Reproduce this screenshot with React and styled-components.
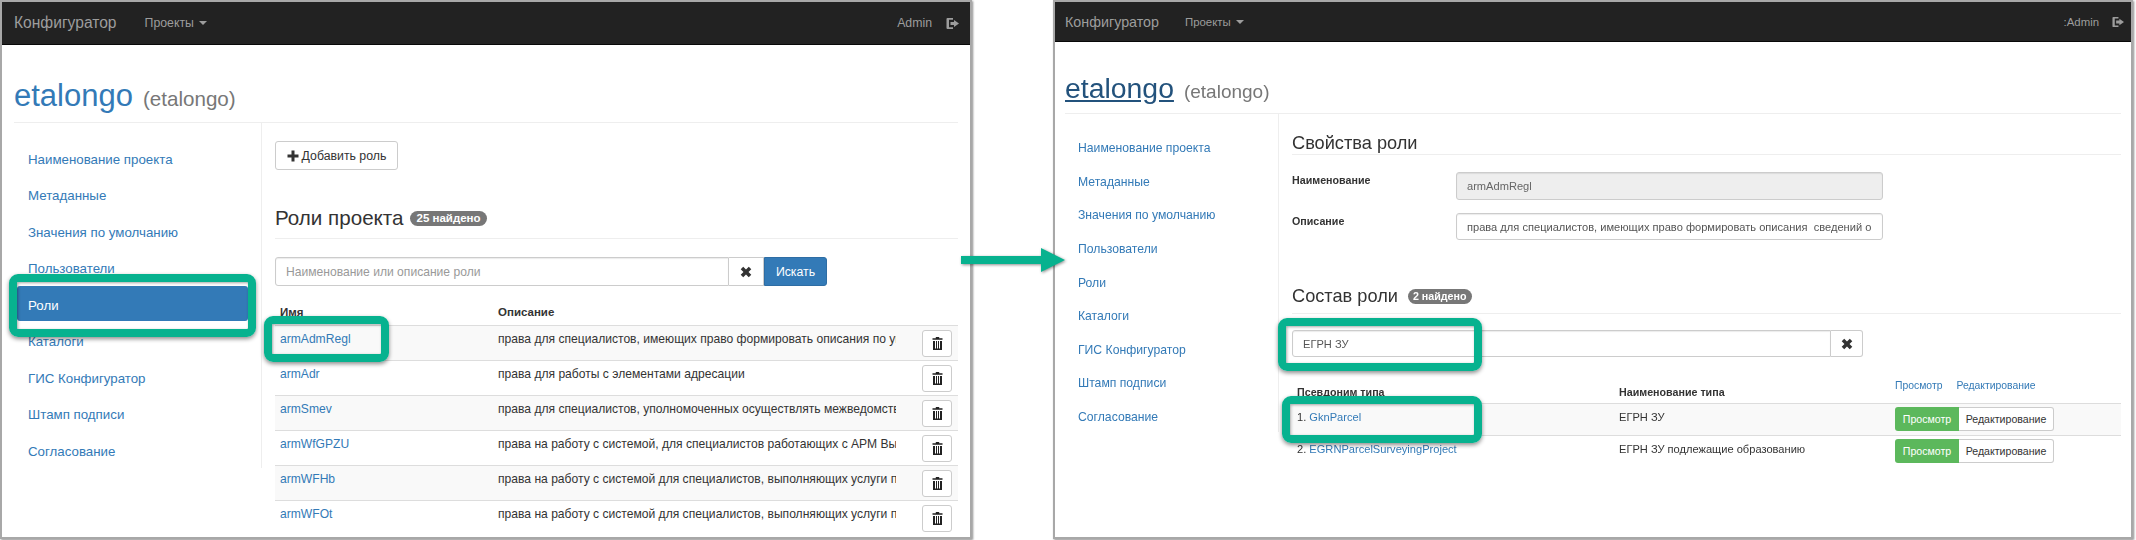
import React from 'react';
import styled, { createGlobalStyle, ThemeProvider } from 'styled-components';

const Global = createGlobalStyle`
  html, body { margin: 0; padding: 0; background: #fff; }
  body { font-family: "Liberation Sans", Arial, sans-serif; color: #333; }
  * { box-sizing: border-box; }
`;

const before = {
  width: 972, navH: 42, navPad: '0 11px 0 12px', navGap: 28, brand: 15.6, navText: 12.3, navGapIcon: 14,
  h1: 31, small: 20.6, h1Top: 34, pagePad: 12, side: 248, sideTop: 17, sideGap: 1.5, itemH: 35, itemW: 231, itemPad: 11,
  sideH: 345, sideText: 13.3, contentPad: 13, text: 12.1, bold: 11.5, h2: 20.6, small2: 11.5, btn: 12.3, badgePad: 6, badgeGap: 7,
};
const after = {
  width: 1080, navH: 39, navPad: '0 7px 0 10px', navGap: 26, brand: 14.3, navText: 11.4, navGapIcon: 13,
  h1: 28.4, small: 19, h1Top: 31, pagePad: 10, side: 214, sideTop: 17, sideGap: 2.6, itemH: 31, itemW: 205, itemPad: 10,
  sideH: 318, sideText: 12.2, contentPad: 13, text: 11.1, bold: 10.7, h2: 18.2, small2: 10.7, btn: 10.6, badgePad: 5, badgeGap: 10,
};

const Page = styled.div`
  position: relative;
  display: flex;
  gap: 81px;
  width: 2136px;
  height: 540px;
  overflow: hidden;
`;

const Win = styled.div`
  position: relative;
  flex: none;
  width: ${p => p.theme.width}px;
  height: 539px;
  border: 2px solid #a8a8a8;
  background: #fff;
  box-shadow: 1px 1px 2px rgba(0, 0, 0, 0.45);
  overflow: hidden;
  ${p => p.$soft && 'filter: blur(0.45px);'}
`;

const Navbar = styled.div`
  display: flex;
  align-items: center;
  gap: ${p => p.theme.navGap}px;
  height: ${p => p.theme.navH + 1}px;
  padding: ${p => p.theme.navPad};
  background: #222;
  border-bottom: 1px solid #080808;
  color: #9d9d9d;
`;

const Brand = styled.span`
  font-size: ${p => p.theme.brand}px;
`;

const NavLink = styled.span`
  display: flex;
  align-items: center;
  gap: 5px;
  font-size: ${p => p.theme.navText}px;
`;

const Caret = styled.i`
  width: 0;
  height: 0;
  border-top: 4px solid #9d9d9d;
  border-left: 4px solid transparent;
  border-right: 4px solid transparent;
`;

const UserBox = styled.div`
  margin-left: auto;
  display: flex;
  align-items: center;
  gap: ${p => p.theme.navGapIcon}px;
  font-size: ${p => p.theme.navText}px;
`;

const Main = styled.div`
  padding: 0 ${p => p.theme.pagePad}px;
`;

const Title = styled.div`
  display: flex;
  align-items: baseline;
  gap: 10px;
  padding: ${p => p.theme.h1Top}px 0 9px;
  border-bottom: 1px solid #eee;
`;

const ProjectName = styled.a`
  font-size: ${p => p.theme.h1}px;
  line-height: 1.1;
  color: ${p => (p.$hover ? '#23527c' : '#337ab7')};
  text-decoration: ${p => (p.$hover ? 'underline' : 'none')};
`;

const ProjectCode = styled.small`
  font-size: ${p => p.theme.small}px;
  color: #777;
`;

const Columns = styled.div`
  display: flex;
  align-items: flex-start;
`;

const Side = styled.ul`
  flex: none;
  list-style: none;
  display: flex;
  flex-direction: column;
  gap: ${p => p.theme.sideGap}px;
  width: ${p => p.theme.side}px;
  height: ${p => p.theme.sideH}px;
  margin: 0;
  padding: ${p => p.theme.sideTop}px 0 0 3px;
  border-right: 1px solid #eee;
`;

const SideItem = styled.li`
  display: flex;
  align-items: center;
  flex: none;
  width: ${p => p.theme.itemW}px;
  height: ${p => p.theme.itemH}px;
  padding: 3px 0 0 ${p => p.theme.itemPad}px;
  font-size: ${p => p.theme.sideText}px;
  border-radius: 3px;
  color: ${p => (p.$active ? '#fff' : '#337ab7')};
  background: ${p => (p.$active ? '#337ab7' : 'transparent')};
`;

const Content = styled.div`
  flex: 1;
  min-width: 0;
  padding: ${p => p.$top}px 0 0 ${p => p.theme.contentPad}px;
`;

const Button = styled.button`
  display: inline-flex;
  align-items: center;
  justify-content: center;
  gap: 3px;
  flex: none;
  width: ${p => p.$w}px;
  height: ${p => p.$h}px;
  padding: 0;
  font: inherit;
  font-size: ${p => p.theme.btn}px;
  color: #333;
  background: #fff;
  border: 1px solid #ccc;
  border-radius: 3px;
`;

const Section = styled.h2`
  display: flex;
  align-items: center;
  gap: ${p => p.theme.badgeGap}px;
  margin: ${p => p.$top}px 0 ${p => p.$bottom}px;
  padding-bottom: ${p => p.$pad}px;
  font-size: ${p => p.theme.h2}px;
  line-height: ${p => p.$lh}px;
  font-weight: 400;
  color: #333;
  border-bottom: 1px solid #eee;
`;

const Badge = styled.span`
  padding: 0 ${p => p.theme.badgePad}px;
  height: 15px;
  line-height: 15px;
  font-size: ${p => p.theme.small2}px;
  font-weight: 700;
  color: #fff;
  background: #777;
  border-radius: 8px;
`;

const SearchRow = styled.div`
  display: flex;
  height: ${p => p.$h}px;
`;

const Field = styled.input`
  display: block;
  width: ${p => p.$w}px;
  height: 100%;
  padding: 0 10px;
  font: inherit;
  font-size: ${p => p.theme.text}px;
  color: ${p => (p.disabled ? '#666' : '#555')};
  background: ${p => (p.disabled ? '#eee' : '#fff')};
  border: 1px solid #ccc;
  border-radius: 3px 0 0 3px;
  box-shadow: inset 0 1px 1px rgba(0, 0, 0, 0.08);
  &::placeholder { color: #999; opacity: 1; }
`;

const ClearBtn = styled(Button)`
  border-left: 0;
  border-radius: ${p => (p.$mid ? '0' : '0 3px 3px 0')};
`;

const SearchBtn = styled(Button)`
  color: #fff;
  background: #337ab7;
  border-color: #2e6da4;
  border-radius: 0 3px 3px 0;
`;

const TableHead = styled.div`
  display: grid;
  grid-template-columns: ${p => p.$cols};
  align-items: end;
  height: ${p => p.$h}px;
  margin-top: ${p => p.$top}px;
  font-size: ${p => p.theme.bold}px;
  font-weight: 700;
  line-height: 18px;
  padding-bottom: ${p => p.$pad}px;
`;

const HeadCell = styled.div`
  padding-left: 5px;
`;

const HeadLinks = styled.div`
  display: flex;
  gap: 14px;
  padding: 0 0 ${p => p.$up}px 5px;
  font-weight: 400;
  font-size: 10.4px;
  color: #337ab7;
`;

const Row = styled.div`
  display: grid;
  grid-template-columns: ${p => p.$cols};
  align-items: start;
  height: ${p => p.$h}px;
  font-size: ${p => p.theme.text}px;
  line-height: 20px;
  border-top: 1px solid #ddd;
  background: ${p => (p.$odd ? '#f9f9f9' : 'transparent')};
`;

const Cell = styled.div`
  padding: 3px 0 0 5px;
  white-space: nowrap;
  overflow: hidden;
`;

const Link = styled.a`
  color: #337ab7;
`;

const CellEnd = styled.div`
  display: flex;
  justify-content: flex-end;
  padding: 4px 5px 0 0;
`;

const CellBtns = styled.div`
  display: flex;
  padding: 3px 0 0 5px;
`;

const ViewBtn = styled.span`
  display: flex;
  align-items: center;
  justify-content: center;
  width: 64px;
  height: 24px;
  font-size: ${p => p.theme.btn}px;
  color: #fff;
  background: #5cb85c;
  border-radius: 3px 0 0 3px;
`;

const EditBtn = styled.span`
  display: flex;
  align-items: center;
  justify-content: center;
  width: 95px;
  height: 24px;
  font-size: ${p => p.theme.btn}px;
  color: #333;
  background: #fff;
  border: 1px solid #ccc;
  border-left: 0;
  border-radius: 0 3px 3px 0;
`;

const Form = styled.div`
  display: grid;
  grid-template-columns: 164px 427px;
  row-gap: 13px;
  margin-top: 17px;
`;

const Label = styled.label`
  font-size: ${p => p.theme.bold}px;
  font-weight: 700;
  line-height: 16px;
`;

const FormField = styled(Field)`
  width: 100%;
  height: ${p => p.$h}px;
  border-radius: 3px;
`;

// green frames drawn on top of the screenshots
const Frame = styled.div`
  position: absolute;
  left: ${p => p.$x}px;
  top: ${p => p.$y}px;
  width: ${p => p.$w}px;
  height: ${p => p.$h}px;
  border: 8px solid #07b28f;
  border-radius: 9px;
  box-shadow: 0 2px 4px rgba(0, 0, 0, 0.45), inset 1px 1px 3px rgba(0, 0, 0, 0.35);
`;

const Arrow = styled.svg`
  position: absolute;
  left: 961px;
  top: 248px;
  filter: drop-shadow(1px 1px 1.5px rgba(0, 0, 0, 0.45));
`;

const Plus = () => (
  <svg width="12" height="12" viewBox="0 0 12 12"><path d="M4.5 0.5h3v4h4v3h-4v4h-3v-4h-4v-3h4z" fill="#333" /></svg>
);

const Cross = () => (
  <svg width="12" height="12" viewBox="0 0 10 10"><path d="M2.7 0.6L5 2.9 7.3 0.6 9.4 2.7 7.1 5 9.4 7.3 7.3 9.4 5 7.1 2.7 9.4 0.6 7.3 2.9 5 0.6 2.7z" fill="#333" /></svg>
);

const Trash = () => (
  <svg width="11" height="13" viewBox="0 0 11 13" fill="#222">
    <path d="M3.8 0h3.4v1.3h3.3v1.5H.5V1.3h3.3z" />
    <path d="M1 4h2v7.5h1V4h1v7.5h1V4h1v7.5h1V4h2v9H1z" />
  </svg>
);

const LogOut = ({ size }) => (
  <svg width={size} height={size} viewBox="0 0 13 13" fill="#9d9d9d">
    <path d="M1.5 1H7v1.8H3v7.4h4V12H1.5A1 1 0 0 1 .5 11V2a1 1 0 0 1 1-1z" />
    <path d="M8 3l5 3.5L8 10V8H4.5V5H8z" />
  </svg>
);

const sideItems = ['Наименование проекта', 'Метаданные', 'Значения по умолчанию', 'Пользователи', 'Роли', 'Каталоги', 'ГИС Конфигуратор', 'Штамп подписи', 'Согласование'];

const roles = [
  ['armAdmRegl', 'права для специалистов, имеющих право формировать описания по управлению'],
  ['armAdr', 'права для работы с элементами адресации'],
  ['armSmev', 'права для специалистов, уполномоченных осуществлять межведомственное взаимодействие'],
  ['armWfGPZU', 'права на работу с системой, для специалистов работающих с АРМ Выдачи ГПЗУ'],
  ['armWFHb', 'права на работу с системой для специалистов, выполняющих услуги по заявкам'],
  ['armWFOt', 'права на работу с системой для специалистов, выполняющих услуги по отчетам'],
];

const types = [
  ['GknParcel', 'ЕГРН ЗУ'],
  ['EGRNParcelSurveyingProject', 'ЕГРН ЗУ подлежащие образованию'],
];

const roleCols = '218px 403px 61px';
const typeCols = '322px 276px 234px';

const Shell = ({ hover, active, soft, iconSize, user, children, frames }) => (
  <Win $soft={soft}>
    <Navbar>
      <Brand>Конфигуратор</Brand>
      <NavLink>Проекты <Caret /></NavLink>
      <UserBox>{user}<LogOut size={iconSize} /></UserBox>
    </Navbar>
    <Main>
      <Title>
        <ProjectName $hover={hover}>etalongo</ProjectName>
        <ProjectCode>(etalongo)</ProjectCode>
      </Title>
      <Columns>
        <Side>
          {sideItems.map(name => <SideItem key={name} $active={name === active}>{name}</SideItem>)}
        </Side>
        {children}
      </Columns>
    </Main>
    {frames}
  </Win>
);

export default function App() {
  return (
    <Page>
      <Global />
      <ThemeProvider theme={before}>
        <Shell
          active="Роли"
          iconSize={13}
          user="Admin"
          frames={
            <>
              <Frame $x={7} $y={272} $w={247} $h={63} />
              <Frame $x={262} $y={314} $w={125} $h={46} />
            </>
          }
        >
          <Content $top={18}>
            <Button $w={123} $h={29}><Plus />Добавить роль</Button>
            <Section $top={34} $bottom={18} $pad={6} $lh={28}>
              Роли проекта <Badge>25 найдено</Badge>
            </Section>
            <SearchRow $h={29}>
              <Field $w={454} placeholder="Наименование или описание роли" />
              <ClearBtn $w={35} $h={29} $mid><Cross /></ClearBtn>
              <SearchBtn $w={63} $h={29}>Искать</SearchBtn>
            </SearchRow>
            <TableHead $cols={roleCols} $h={25} $top={14} $pad={4}>
              <HeadCell>Имя</HeadCell>
              <HeadCell>Описание</HeadCell>
            </TableHead>
            {roles.map(([name, text], i) => (
              <Row key={name} $cols={roleCols} $h={35} $odd={i % 2 === 0}>
                <Cell><Link>{name}</Link></Cell>
                <Cell>{text}</Cell>
                <CellEnd><Button $w={30} $h={27}><Trash /></Button></CellEnd>
              </Row>
            ))}
          </Content>
        </Shell>
      </ThemeProvider>

      <ThemeProvider theme={after}>
        <Shell
          hover
          soft
          iconSize={12}
          user=":Admin"
          frames={
            <>
              <Frame $x={223} $y={316} $w={204} $h={53} />
              <Frame $x={227} $y={394} $w={200} $h={47} />
            </>
          }
        >
          <Content $top={0}>
            <Section $top={18} $bottom={0} $pad={0} $lh={22}>Свойства роли</Section>
            <Form>
              <Label>Наименование</Label>
              <FormField $h={28} disabled defaultValue="armAdmRegl" />
              <Label>Описание</Label>
              <FormField $h={27} readOnly defaultValue="права для специалистов, имеющих право формировать описания  сведений о" />
            </Form>
            <Section $top={43} $bottom={16} $pad={4} $lh={26}>
              Состав роли <Badge>2 найдено</Badge>
            </Section>
            <SearchRow $h={27}>
              <Field $w={539} readOnly defaultValue="ЕГРН ЗУ" />
              <ClearBtn $w={32} $h={27}><Cross /></ClearBtn>
            </SearchRow>
            <TableHead $cols={typeCols} $h={46} $top={0} $pad={2}>
              <HeadCell>Псевдоним типа</HeadCell>
              <HeadCell>Наименование типа</HeadCell>
              <HeadLinks $up={6}><span>Просмотр</span><span>Редактирование</span></HeadLinks>
            </TableHead>
            {types.map(([alias, name], i) => (
              <Row key={alias} $cols={typeCols} $h={32} $odd={i === 0}>
                <Cell>{i + 1}. <Link>{alias}</Link></Cell>
                <Cell>{name}</Cell>
                <CellBtns><ViewBtn>Просмотр</ViewBtn><EditBtn>Редактирование</EditBtn></CellBtns>
              </Row>
            ))}
          </Content>
        </Shell>
      </ThemeProvider>

      <Arrow width="106" height="26" viewBox="0 0 106 26">
        <path d="M0 8H80V0L104 12L80 24V16H0Z" fill="#07b28f" />
      </Arrow>
    </Page>
  );
}
